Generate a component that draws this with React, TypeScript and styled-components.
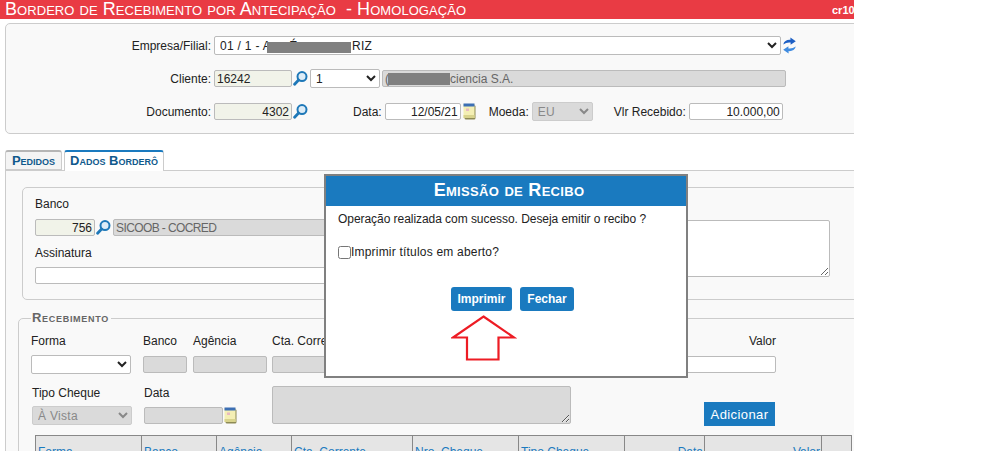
import React from "react";
import styled, {createGlobalStyle} from "styled-components";

const GlobalStyle = createGlobalStyle`
    html, body {
        margin: 0;
        padding: 0;
        background: #fff;
        overflow: hidden;
    }
    * {
        box-sizing: border-box;
    }
`;

const FONT = `"Liberation Sans", Arial, sans-serif`;
const BLUE = "#1a7abf";

const Screen = styled.div`
    position: relative;
    width: 854px;
    height: 451px;
    overflow: hidden;
    background: #fff;
    font-family: ${FONT};
    font-size: 12px;
    color: #222;
`;

const Header = styled.div`
    display: flex;
    justify-content: space-between;
    height: 19px;
    padding-left: 5px;
    background: #e93b44;
    color: #fff;
`;

const HeaderTitle = styled.div`
    font-size: 18px;
    line-height: 19px;
    font-variant: small-caps;
    letter-spacing: 0.06px;
    white-space: pre;
`;

const HeaderCode = styled.div`
    width: 22px;
    overflow: hidden;
    font-size: 11px;
    line-height: 20px;
    font-weight: bold;
`;

const TopPanel = styled.div`
    width: 870px;
    height: 111px;
    margin: 4px 0 0 5px;
    padding: 12px 0 0;
    background: #f9f9f9;
    border: 1px solid #ccc;
    border-radius: 5px;
`;

const Row = styled.div<{$mt?: number}>`
    display: flex;
    align-items: center;
    margin-top: ${(p) => p.$mt ?? 0}px;
`;

const FieldLabel = styled.label<{$w?: number; $ml?: number}>`
    width: ${(p) => (p.$w ? `${p.$w}px` : "auto")};
    margin-left: ${(p) => p.$ml ?? 0}px;
    margin-right: 3px;
    flex: none;
    text-align: right;
    white-space: nowrap;
`;

const TONES = {
    plain: "#fff",
    search: "#f1f3e9",
    disabled: "#dadada",
};

const Input = styled.input<{
    $w: number;
    $tone?: keyof typeof TONES;
    $right?: boolean;
    $ml?: number;
    $mt?: number;
}>`
    flex: none;
    display: block;
    width: ${(p) => p.$w}px;
    height: 17px;
    margin: ${(p) => p.$mt ?? 0}px 0 0 ${(p) => p.$ml ?? 0}px;
    padding: 0 2px;
    border: 1px solid #bbb;
    border-radius: 2px;
    background: ${(p) => TONES[p.$tone ?? "plain"]};
    color: #222;
    font: 12px ${FONT};
    text-align: ${(p) => (p.$right ? "right" : "left")};
    outline: none;
`;

const ReadBox = styled.div<{$w: number; $ml?: number; $spacing?: number}>`
    flex: none;
    display: flex;
    align-items: center;
    width: ${(p) => p.$w}px;
    height: 17px;
    margin-left: ${(p) => p.$ml ?? 0}px;
    padding: 0 2px;
    border: 1px solid #bbb;
    border-radius: 2px;
    background: #dadada;
    color: #666;
    letter-spacing: ${(p) => p.$spacing ?? 0}px;
    white-space: pre;
    overflow: hidden;
`;

const Select = styled.select<{$w: number; $ml?: number; $mt?: number; $off?: boolean}>`
    flex: none;
    display: block;
    width: ${(p) => p.$w}px;
    height: 19px;
    margin: ${(p) => p.$mt ?? 0}px 0 0 ${(p) => p.$ml ?? 0}px;
    padding: 0 0 0 1px;
    border: 1px solid ${(p) => (p.$off ? "#ccc" : "#bbb")};
    border-radius: 2px;
    background-color: ${(p) => (p.$off ? "#dadada" : "#fff")};
    color: ${(p) => (p.$off ? "#888" : "#222")};
    opacity: 1;
    font: 12px ${FONT};
    letter-spacing: 0.3px;
`;

const Overlaid = styled.div`
    position: relative;
    flex: none;
    display: flex;
`;

const SelectRedaction = styled.span`
    position: absolute;
    left: 53px;
    top: 6px;
    width: 84px;
    height: 11px;
    background: #808080;
`;

const InlineRedaction = styled.span`
    flex: none;
    width: 62px;
    height: 12px;
    margin-left: -1px;
    background: #808080;
`;

const IconSlot = styled.span<{$ml?: number; $w?: number}>`
    flex: none;
    display: inline-flex;
    width: ${(p) => p.$w ?? 15}px;
    margin-left: ${(p) => p.$ml ?? 0}px;
`;

const SearchIcon = () => (
    <svg width="15" height="15" viewBox="0 0 15 15">
        <circle cx="9" cy="5.6" r="4.5" fill="#dcecf7" stroke="#1e78b8" strokeWidth="2"/>
        <path d="M5.6 9 L1.6 13.2" stroke="#1e78b8" strokeWidth="2.8" strokeLinecap="round"/>
    </svg>
);

const CalendarIcon = () => (
    <svg width="13" height="17" viewBox="0 0 13 17">
        <rect x="1.5" y="2" width="11" height="14.5" rx="1.5" fill="#8d8a55"/>
        <rect x="0.5" y="1" width="11" height="14" fill="#f4efb4"/>
        <rect x="0.5" y="0.5" width="11" height="3" fill="#3c6fb4"/>
        <rect x="3" y="5.5" width="3" height="2.5" fill="#e8b9c0"/>
        <rect x="0.5" y="12" width="11" height="3" fill="#d9d48d"/>
    </svg>
);

const RefreshIcon = () => (
    <svg width="13" height="17" viewBox="0 0 13 17">
        <path d="M0.3 7.6 C1 4 4 2.6 7.4 2.9 L7.4 0.4 L12.8 4.2 L7.6 7.8 L7.6 5.6 C5 5.2 2.6 5.8 0.3 7.6 Z" fill="#1d5fc4"/>
        <path d="M12.8 9.6 C12 13 9 14.4 5.6 14.1 L5.6 16.6 L0.2 12.8 L5.4 9.2 L5.4 11.4 C8 11.8 10.4 11.2 12.8 9.6 Z" fill="#3f8be0"/>
    </svg>
);

const TabBar = styled.div`
    display: flex;
    gap: 2px;
    height: 20px;
    margin: 16px 0 0 5px;
`;

const Tab = styled.div<{$active?: boolean; $w: number}>`
    position: relative;
    z-index: 1;
    width: ${(p) => p.$w}px;
    height: ${(p) => (p.$active ? 21 : 20)}px;
    border: 1px solid #ccc;
    border-top: 2px solid ${(p) => (p.$active ? BLUE : "#b5b5b5")};
    border-bottom: ${(p) => (p.$active ? "none" : "1px solid #ccc")};
    border-radius: 3px 3px 0 0;
    background: ${(p) => (p.$active ? "#fff" : "#f4f4f4")};
    color: #10598c;
    font-weight: bold;
    font-size: 13px;
    font-variant: small-caps;
    line-height: 18px;
    text-align: center;
    white-space: nowrap;
`;

const TabPanel = styled.div`
    width: 870px;
    height: 300px;
    margin-left: 5px;
    padding: 16px 0 0 12px;
    border: 1px solid #ccc;
    background: #f9f9f9;
`;

const BancoGroup = styled.div`
    display: flex;
    justify-content: space-between;
    width: 860px;
    height: 113px;
    margin-left: 4px;
    padding: 9px 51px 0 12px;
    border: 1px solid #ccc;
    border-radius: 5px;
`;

const BancoColumn = styled.div`
    display: flex;
    flex-direction: column;
`;

const StackLabel = styled.span<{$mt?: number}>`
    display: block;
    margin-top: ${(p) => p.$mt ?? 0}px;
    line-height: 14px;
    white-space: nowrap;
`;

const Notes = styled.textarea<{$w: number; $h: number; $off?: boolean}>`
    flex: none;
    display: block;
    width: ${(p) => p.$w}px;
    height: ${(p) => p.$h}px;
    margin: 0;
    padding: 0;
    border: 1px solid #bbb;
    border-radius: 2px;
    background: ${(p) => (p.$off ? "#dadada" : "#fff")};
    outline: none;
`;

const NotesColumn = styled.div`
    padding-top: 23px;
`;

const Recebimento = styled.fieldset`
    width: 860px;
    height: 160px;
    margin: 13px 0 0 0;
    padding: 0 0 0 12px;
    border: 1px solid #ccc;
    border-radius: 5px;
`;

const Legend = styled.legend`
    padding: 0 2px 0 1px;
    margin-left: 0;
    color: #666;
    font-size: 13px;
    font-weight: bold;
    font-variant: small-caps;
    letter-spacing: 0.7px;
    line-height: 10px;
`;

const FormBody = styled.div`
    margin-top: 11px;
`;

const FormLine = styled.div<{$mt?: number}>`
    display: flex;
    align-items: center;
    margin-top: ${(p) => p.$mt ?? 0}px;
`;

const FormLineTop = styled(FormLine)`
    align-items: flex-start;
`;

const Field = styled.div<{$w: number; $ml?: number; $right?: boolean}>`
    flex: none;
    width: ${(p) => p.$w}px;
    margin-left: ${(p) => p.$ml ?? 0}px;
    text-align: ${(p) => (p.$right ? "right" : "left")};
`;

const AddButton = styled.button`
    flex: none;
    width: 71px;
    height: 24px;
    margin: 16px 0 0 133px;
    padding: 0;
    border: none;
    background: ${BLUE};
    color: #fff;
    font: 13px ${FONT};
    letter-spacing: 0.4px;
`;

const Grid = styled.table`
    width: 816px;
    margin: 9px 0 0 4px;
    border-collapse: collapse;
    table-layout: fixed;
    background: #e5e5e5;
`;

const Th = styled.th<{$w: number; $right?: boolean}>`
    width: ${(p) => p.$w}px;
    height: 30px;
    padding: 9px 1px 0 2px;
    border: 1px solid #888;
    color: ${BLUE};
    font-weight: normal;
    font-size: 12px;
    vertical-align: top;
    text-align: ${(p) => (p.$right ? "right" : "left")};
    white-space: nowrap;
`;

const Modal = styled.div`
    position: absolute;
    left: 324px;
    top: 174px;
    width: 364px;
    height: 204px;
    border: 2px solid #808080;
    background: #fff;
`;

const ModalTitle = styled.div`
    height: 30px;
    padding-left: 6px;
    background: ${BLUE};
    color: #fff;
    font-size: 18px;
    font-weight: bold;
    font-variant: small-caps;
    letter-spacing: 0.3px;
    line-height: 29px;
    text-align: center;
`;

const ModalBody = styled.div`
    padding: 6px 0 0 12px;
`;

const ModalText = styled.p`
    margin: 0;
    line-height: 14px;
    letter-spacing: -0.05px;
`;

const CheckLine = styled.label`
    display: flex;
    align-items: center;
    margin-top: 19px;
    letter-spacing: 0.2px;
`;

const Check = styled.input`
    width: 13px;
    height: 13px;
    margin: 0;
`;

const ButtonRow = styled.div`
    display: flex;
    gap: 8px;
    margin: 28px 0 0 113px;
`;

const ModalButton = styled.button<{$w: number}>`
    width: ${(p) => p.$w}px;
    height: 24px;
    padding: 0;
    border: none;
    border-radius: 3px;
    background: ${BLUE};
    color: #fff;
    font: bold 12px ${FONT};
`;

const ArrowSlot = styled.div`
    margin: 4px 0 0 113px;
    line-height: 0;
`;

const UpArrow = () => (
    <svg width="66" height="46" viewBox="0 0 66 46">
        <path d="M32.5 1.5 L63 22.5 L47.5 22.5 L47.5 44.5 L16 44.5 L16 22.5 L2 22.5 Z" fill="#fff" stroke="#ed1c24" strokeWidth="2.2"/>
    </svg>
);

const nbsp = (n: number) => "\u00a0".repeat(n);

export default function App() {
    return (
        <Screen>
            <GlobalStyle/>
            <Header>
                <HeaderTitle>Bordero de Recebimento por Antecipação  - Homologação</HeaderTitle>
                <HeaderCode>cr10</HeaderCode>
            </Header>

            <TopPanel>
                <Row>
                    <FieldLabel $w={205}>Empresa/Filial:</FieldLabel>
                    <Overlaid>
                        <Select $w={567} defaultValue="e">
                            <option value="e">01 / 1 - A{nbsp(5)}É{nbsp(15)}RIZ</option>
                        </Select>
                        <SelectRedaction/>
                    </Overlaid>
                    <IconSlot $ml={2}><RefreshIcon/></IconSlot>
                </Row>
                <Row $mt={14}>
                    <FieldLabel $w={205}>Cliente:</FieldLabel>
                    <Input $w={78} $tone="search" defaultValue="16242" readOnly/>
                    <IconSlot $ml={1}><SearchIcon/></IconSlot>
                    <Select $w={70} $ml={2} defaultValue="1">
                        <option value="1">1</option>
                    </Select>
                    <ReadBox $w={404} $ml={2}>
                        (<InlineRedaction/>ciencia S.A.
                    </ReadBox>
                </Row>
                <Row $mt={14}>
                    <FieldLabel $w={205}>Documento:</FieldLabel>
                    <Input $w={78} $tone="search" $right defaultValue="4302" readOnly/>
                    <IconSlot $ml={1}><SearchIcon/></IconSlot>
                    <FieldLabel $ml={45}>Data:</FieldLabel>
                    <Input $w={76} $right defaultValue="12/05/21" readOnly/>
                    <IconSlot $ml={2}><CalendarIcon/></IconSlot>
                    <FieldLabel $ml={11}>Moeda:</FieldLabel>
                    <Select $w={61} $off disabled defaultValue="EU">
                        <option value="EU">EU</option>
                    </Select>
                    <FieldLabel $ml={21}>Vlr Recebido:</FieldLabel>
                    <Input $w={94} $right defaultValue="10.000,00" readOnly/>
                </Row>
            </TopPanel>

            <TabBar>
                <Tab $w={57}>Pedidos</Tab>
                <Tab $w={100} $active>Dados Borderô</Tab>
            </TabBar>

            <TabPanel>
                <BancoGroup>
                    <BancoColumn>
                        <StackLabel>Banco</StackLabel>
                        <Row $mt={8}>
                            <Input $w={60} $tone="search" $right defaultValue="756" readOnly/>
                            <IconSlot $ml={1}><SearchIcon/></IconSlot>
                            <ReadBox $w={400} $ml={2} $spacing={-0.6}>SICOOB - COCRED</ReadBox>
                        </Row>
                        <StackLabel $mt={10}>Assinatura</StackLabel>
                        <Input $w={400} $mt={7} readOnly/>
                    </BancoColumn>
                    <NotesColumn>
                        <Notes $w={220} $h={57} readOnly/>
                    </NotesColumn>
                </BancoGroup>

                <Recebimento>
                    <Legend>Recebimento</Legend>
                    <FormBody>
                        <FormLine>
                            <Field $w={100}><StackLabel>Forma</StackLabel></Field>
                            <Field $w={44} $ml={12}><StackLabel>Banco</StackLabel></Field>
                            <Field $w={74} $ml={6}><StackLabel>Agência</StackLabel></Field>
                            <Field $w={80} $ml={5}><StackLabel>Cta. Corrente</StackLabel></Field>
                            <Field $w={424} $right><StackLabel>Valor</StackLabel></Field>
                        </FormLine>
                        <FormLine $mt={7}>
                            <Select $w={100} defaultValue="">
                                <option value=""></option>
                            </Select>
                            <Input $w={44} $ml={12} $tone="disabled" readOnly/>
                            <Input $w={74} $ml={6} $tone="disabled" readOnly/>
                            <Input $w={80} $ml={5} $tone="disabled" readOnly/>
                            <Input $w={424} readOnly/>
                        </FormLine>
                        <FormLineTop $mt={12}>
                            <Field $w={112} $ml={1}>
                                <StackLabel>Tipo Cheque</StackLabel>
                                <Select $w={100} $mt={6} $off disabled defaultValue="v">
                                    <option value="v">À Vista</option>
                                </Select>
                            </Field>
                            <Field $w={128}>
                                <StackLabel>Data</StackLabel>
                                <Row $mt={7}>
                                    <Input $w={79} $tone="disabled" readOnly/>
                                    <IconSlot $ml={1}><CalendarIcon/></IconSlot>
                                </Row>
                            </Field>
                            <Notes $w={299} $h={38} $off readOnly/>
                            <AddButton>Adicionar</AddButton>
                        </FormLineTop>
                    </FormBody>
                    <Grid>
                        <thead>
                            <tr>
                                <Th $w={106}>Forma</Th>
                                <Th $w={75}>Banco</Th>
                                <Th $w={75}>Agência</Th>
                                <Th $w={121}>Cta. Corrente</Th>
                                <Th $w={106}>Nro. Cheque</Th>
                                <Th $w={106}>Tipo Cheque</Th>
                                <Th $w={80} $right>Data</Th>
                                <Th $w={117} $right>Valor</Th>
                                <Th $w={30}></Th>
                            </tr>
                        </thead>
                    </Grid>
                </Recebimento>
            </TabPanel>

            <Modal>
                <ModalTitle>Emissão de Recibo</ModalTitle>
                <ModalBody>
                    <ModalText>Operação realizada com sucesso. Deseja emitir o recibo ?</ModalText>
                    <CheckLine><Check type="checkbox"/>Imprimir títulos em aberto?</CheckLine>
                    <ButtonRow>
                        <ModalButton $w={61}>Imprimir</ModalButton>
                        <ModalButton $w={54}>Fechar</ModalButton>
                    </ButtonRow>
                    <ArrowSlot><UpArrow/></ArrowSlot>
                </ModalBody>
            </Modal>
        </Screen>
    );
}
